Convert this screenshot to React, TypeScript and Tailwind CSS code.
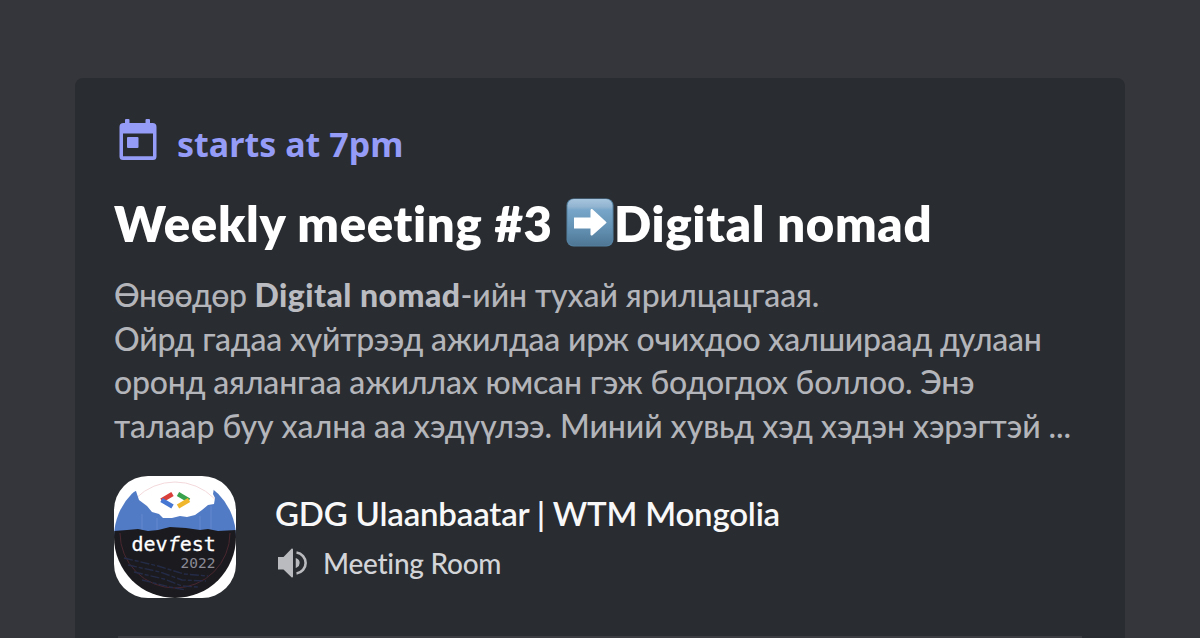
function CalendarIcon() {
  return (
    <svg viewBox="0 0 38 42" className="block h-[42px] w-[38px]" fill="#949cf7" aria-hidden="true">
      <path
        fillRule="evenodd"
        d="M6 1a1 1 0 0 1 1-1h2.500a1 1 0 0 1 1 1V4h16V1a1 1 0 0 1 1-1h2.500a1 1 0 0 1 1 1V4h2.500A4 4 0 0 1 37.500 8v29.500a3.500 3.500 0 0 1-3.500 3.500h-30a3.500 3.500 0 0 1-3.500-3.500V8a4 4 0 0 1 4-4H6ZM4 14.500V37.200h30V14.500Z"
      />
      <rect x="8" y="18" width="11.500" height="11" rx="1" />
    </svg>
  );
}

function ArrowEmoji() {
  return (
    <svg viewBox="0 0 48 49" className="block h-[49px] w-[48px] shrink-0" role="img" aria-label="right arrow">
      <defs>
        <linearGradient id="key" x1="0" y1="0" x2="0" y2="1">
          <stop offset="0" stopColor="#a6c4dd" />
          <stop offset="0.16" stopColor="#93b5d1" />
          <stop offset="0.24" stopColor="#76a5c9" />
          <stop offset="0.6" stopColor="#6593b5" />
          <stop offset="1" stopColor="#4f7795" />
        </linearGradient>
      </defs>
      <rect x="0.500" y="0.500" width="47" height="48" rx="7" fill="#54809f" />
      <rect x="1.500" y="1" width="45" height="46.500" rx="6.500" fill="url(#key)" />
      <path d="M8 19.500h16.500v-7c0-1.500 1-2 2-1.200L40 23.700c.7.6.7 1 0 1.600L26.500 37.200c-1 .8-2 .3-2-1.200V30.500H8Z" fill="#fff" />
    </svg>
  );
}

function SpeakerIcon() {
  return (
    <svg viewBox="0 0 32 30" className="block h-[30px] w-[32px]" aria-hidden="true">
      <path d="M1 9h5.500L14.500.8c.5-.5 1.500-.3 1.500.6v27.200c0 .9-1 1.100-1.500.6L6.500 21.500H1Z" fill="#b9bbbe" />
      <path d="M19.500 11.200A4.200 4.200 0 0 1 19.500 18.800Z" fill="#b9bbbe" stroke="#b9bbbe" strokeWidth="1.500" />
      <path d="M19.500 4.500A10.600 10.600 0 0 1 19.500 25.500" fill="none" stroke="#b9bbbe" strokeWidth="2.600" />
    </svg>
  );
}

function ServerLogo() {
  return (
    <svg viewBox="0 0 122 122" className="block size-[122px] shrink-0" role="img" aria-label="devfest 2022">
      <defs>
        <clipPath id="tile">
          <rect width="122" height="122" rx="34" />
        </clipPath>
        <clipPath id="disc">
          <circle cx="61" cy="61" r="61" />
        </clipPath>
      </defs>
      <g clipPath="url(#tile)">
        <rect width="122" height="122" fill="#fff" />
        <circle cx="61" cy="61" r="55" fill="none" stroke="#f3d9dc" strokeWidth="1" />
        <g clipPath="url(#disc)">
          <path
            d="M0 60V36L8 24 15 17l7-2 3 9 8 6 5 6 7 2 4 4 9 0 8-2 7 1 8-2 7-5 6-5 6-1 1-6-2-4 1-6 4-1 11 10 8 12V60Z"
            fill="#527bc5"
          />
          <path d="M28 38v16M43 42v12M86 40v14M97 30v24" stroke="#6289cf" strokeWidth="1" />
          <path d="M0 55l13-1 11-1 10 2 10-1 12-3 16 1 14 2 8-1 10 2 18-1v68H0Z" fill="#1b1b1f" />
          <path d="M6 57a55 55 0 0 0 110 0" fill="none" stroke="#4a2730" strokeWidth="1" />
          <path
            d="M10 82l34 8 26 8 24 2M14 89l32 7 22 8 24 1M20 96l30 7 18 7 16 1M28 104l28 7 16 3"
            fill="none"
            stroke="#242b47"
            strokeWidth="1.400"
            strokeDasharray="9 2 4 2"
          />
        </g>
        <g strokeWidth="4.600" fill="none">
          <path d="M58.500 18L47.500 24.500" stroke="#d93f3b" />
          <path d="M47.500 24L58.500 30.500" stroke="#4577d3" />
          <path d="M64 18L75 24.500" stroke="#38a24c" />
          <path d="M75 24L64 30.500" stroke="#f0b62c" />
        </g>
        <text x="17.500" y="75" fontSize="20" fill="#fff" stroke="#fff" strokeWidth="0.300" className="font-['DejaVu_Sans_Mono',monospace]">
          dev<tspan fontStyle="italic">f</tspan>est
        </text>
        <text x="66.500" y="92" fontSize="14.500" fill="#8b8b96" className="font-['DejaVu_Sans_Mono',monospace]">
          2022
        </text>
      </g>
    </svg>
  );
}

export default function App() {
  return (
    <main className="flex h-[638px] w-[1200px] overflow-hidden bg-[#35363b] pr-[75.500px] pl-[75px] pt-[78px] font-['Lato','Noto_Sans',sans-serif]">
      <article className="flex h-[640px] w-full shrink-0 flex-col rounded-t-[8px] bg-[#292c30] pt-[41px] pl-[39px]">
        <div className="flex h-[50px] items-start">
          <div className="ml-[5px]">
            <CalendarIcon />
          </div>
          <span className="ml-[20px] pt-[2px] font-['Noto_Sans',sans-serif] text-[34px] leading-[46px] font-bold tracking-[0.020px] whitespace-nowrap text-[#949cf7]">
            starts at 7pm
          </span>
        </div>

        <h1 className="mt-[24px] flex h-[60px] items-center text-[49px] leading-[60px] font-extrabold whitespace-nowrap text-white">
          <span className="w-[452px] tracking-[0.700px]">Weekly meeting #3</span>
          <div className="-mt-[1px]">
            <ArrowEmoji />
          </div>
          <span className="tracking-[0.700px]">Digital nomad</span>
        </h1>

        <div className="mt-[20px] text-[32px] leading-[43.700px] font-medium whitespace-nowrap text-[#b3b5ba]">
          <p className="tracking-[-0.100px]">
            <span className="tracking-[-0.350px]">Өнөөдөр </span>
            <strong className="font-black tracking-[0.450px] text-[#babcc1]">Digital nomad</strong>-ийн тухай ярилцацгаая.
          </p>
          <p className="tracking-[-0.220px]">Ойрд гадаа хүйтрээд ажилдаа ирж очихдоо халшираад дулаан</p>
          <p className="tracking-[-0.200px]">оронд аялангаа ажиллах юмсан гэж бодогдох боллоо. Энэ</p>
          <p className="tracking-[-0.080px]">талаар буу хална аа хэдүүлээ. Миний хувьд хэд хэдэн хэрэгтэй ...</p>
        </div>

        <div className="mt-[28px] flex">
          <ServerLogo />
          <div className="ml-[39px] flex flex-col whitespace-nowrap">
            <span className="mt-[15px] text-[33px] leading-[44px] font-semibold tracking-[-0.200px] text-[#f8f8f9]">
              GDG Ulaanbaatar | WTM Mongolia
            </span>
            <div className="mt-[8px] flex items-center">
              <div className="ml-[2px]">
                <SpeakerIcon />
              </div>
              <span className="ml-[14px] text-[28px] leading-[40px] font-medium tracking-[-0.250px] text-[#d2d4d8]">Meeting Room</span>
            </div>
          </div>
        </div>

        <div className="mt-[38px] ml-[4px] h-[3px] w-[964px] shrink-0 bg-[#3b3d43]" />
      </article>
    </main>
  );
}
